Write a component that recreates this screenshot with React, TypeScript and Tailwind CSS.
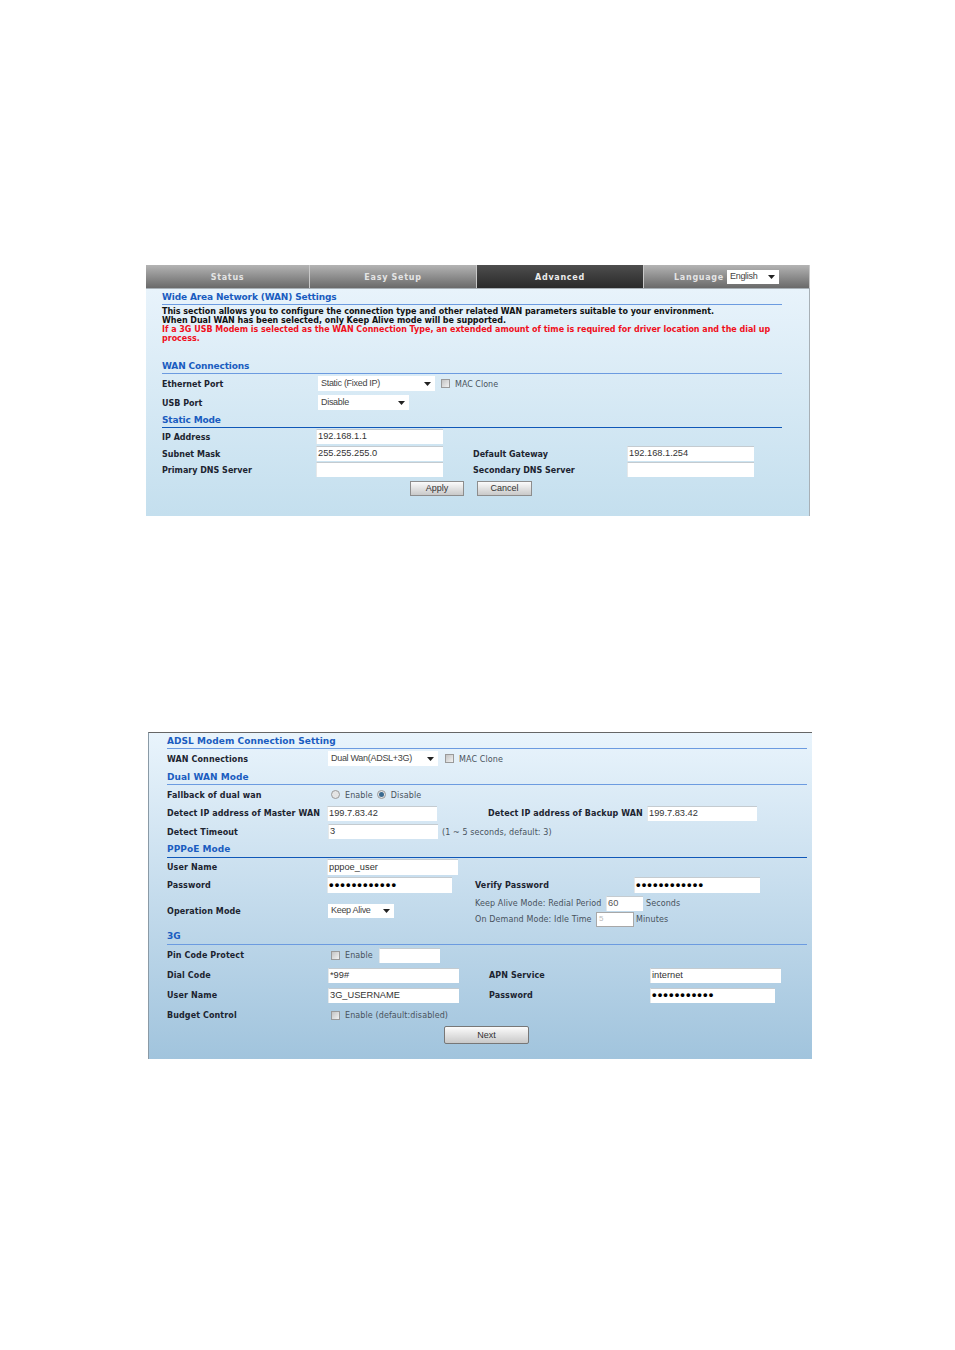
import type { ReactNode } from "react"

const labelFont = "font-['DejaVu_Sans',sans-serif]"
const inputFont = "font-['Liberation_Sans',Arial,sans-serif]"

function SectionHeading({ title, className, dark, wide }: { title: string; className: string; dark?: boolean; wide?: boolean }) {
  return (
    <div
      className={`flex items-center border-b text-[9px] font-bold leading-none text-[#1a5cc0] ${className} ${
        wide ? "tracking-[0.05px]" : "tracking-[-0.15px]"
      } ${dark ? "border-[#1058b8]" : "border-[#6c9be0]"}`}
    >
      {title}
    </div>
  )
}

function Label({ children, className = "" }: { children: ReactNode; className?: string }) {
  return (
    <span className={`shrink-0 whitespace-nowrap pt-[2px] text-[8px] font-bold leading-none text-[#1c2430] ${className}`}>
      {children}
    </span>
  )
}

function Note({ children, className = "" }: { children: ReactNode; className?: string }) {
  return (
    <span className={`shrink-0 whitespace-nowrap pt-[2px] text-[8px] leading-none text-[#48525c] ${className}`}>
      {children}
    </span>
  )
}

function TextBox({ value, className = "", dots }: { value?: string; className?: string; dots?: boolean }) {
  return (
    <span
      className={`flex shrink-0 items-center overflow-hidden whitespace-nowrap border-t border-l border-t-[#c4cbd0] border-l-[#e4e8ea] bg-white pl-[1px] leading-none text-[#333] ${inputFont} ${
        dots ? "pb-[2px] text-[13px] font-bold tracking-[1.12px] text-black" : "text-[9.25px] tracking-normal"
      } ${className}`}
    >
      {value}
    </span>
  )
}

function Select({ value, className = "" }: { value: string; className?: string }) {
  return (
    <span className={`flex shrink-0 items-center justify-between bg-white pl-[3px] pr-[3px] text-[9px] font-normal leading-none tracking-[-0.3px] text-[#444] ${inputFont} ${className}`}>
      {value}
      <svg width="7" height="4" viewBox="0 0 7 4" className="mr-[1px]">
        <path d="M0 0h7L3.5 4z" fill="#222" />
      </svg>
    </span>
  )
}

function Checkbox({ className = "" }: { className?: string }) {
  return <span className={`h-[9px] w-[9px] shrink-0 border border-[#9a9a9a] bg-gradient-to-br from-[#c4c4c4] to-[#f2f2f2] ${className}`} />
}

function Radio({ checked, className = "" }: { checked?: boolean; className?: string }) {
  return (
    <span className={`flex h-[9px] w-[9px] shrink-0 items-center justify-center rounded-full border border-[#9a9a9a] bg-[#e4e4e4] ${className}`}>
      {checked && <span className="h-[5px] w-[5px] rounded-full bg-[#3a6a90]" />}
    </span>
  )
}

function Button({ label, className = "" }: { label: string; className?: string }) {
  return (
    <span className={`flex shrink-0 items-center justify-center border border-[#8d8d8d] bg-gradient-to-b from-[#fbfbfb] to-[#c9c9c9] text-[9px] leading-none tracking-normal text-[#333] ${inputFont} ${className}`}>
      {label}
    </span>
  )
}

function Row({ children, height }: { children: ReactNode; height: string }) {
  return <div className={`flex items-center ${height}`}>{children}</div>
}

function Tab({ label, active, children, width }: { label: string; active?: boolean; children?: ReactNode; width: string }) {
  return (
    <div
      className={`flex h-full items-center justify-center gap-[3px] border-r border-[#c8c8c8] text-[8px] font-bold tracking-[0.09em] ${width} ${
        active
          ? "bg-gradient-to-b from-[#4e4e4e] to-[#2a2a2a] text-[#ececec]"
          : "bg-gradient-to-b from-[#b4b4b4] to-[#6a6a6a] text-[#e4e4e4]"
      }`}
    >
      <span className="pt-[2px] leading-none">{label}</span>
      {children}
    </div>
  )
}

function WanSettings() {
  return (
    <section className={`ml-[146px] w-[664px] tracking-[0px] ${labelFont}`}>
      <div className="flex h-[23px]">
        <Tab label="Status" width="w-[164px]" />
        <Tab label="Easy Setup" width="w-[167px]" />
        <Tab label="Advanced" width="w-[167px]" active />
        <Tab label="Language" width="w-[166px]">
          <Select value="English" className="h-[14px] w-[52px]" />
        </Tab>
      </div>
      <div className="border-t border-r border-[#a8b0b6] bg-gradient-to-b from-[#e8f3fb] to-[#c4dfee] pl-[16px] pb-[20px]">
        <div className="w-[620px]">
          <SectionHeading title="Wide Area Network (WAN) Settings" className="h-[16px] pt-[1px]" />
          <div className="mt-[2px] text-[8px] font-bold leading-[9px] tracking-[-0.02px] text-[#111]">
            <p>This section allows you to configure the connection type and other related WAN parameters suitable to your environment.</p>
            <p>When Dual WAN has been selected, only Keep Alive mode will be supported.</p>
            <p className="text-[#f0101c]">
              If a 3G USB Modem is selected as the WAN Connection Type, an extended amount of time is required for driver location and the dial up process.
            </p>
          </div>
          <div className="mt-[16px]">
            <SectionHeading title="WAN Connections" className="h-[15px] pt-[1px]" />
          </div>
          <Row height="h-[19px]">
            <Label className="w-[156px]">Ethernet Port</Label>
            <Select value="Static (Fixed IP)" className="h-[15px] w-[117px]" />
            <Checkbox className="ml-[6px]" />
            <Note className="ml-[5px]">MAC Clone</Note>
          </Row>
          <Row height="h-[19px]">
            <Label className="w-[156px]">USB Port</Label>
            <Select value="Disable" className="h-[15px] w-[91px]" />
          </Row>
          <SectionHeading title="Static Mode" className="h-[16px] pt-[2px]" dark />
          <Row height="h-[17px]">
            <Label className="w-[154px]">IP Address</Label>
            <TextBox value="192.168.1.1" className="h-[15px] w-[127px]" />
          </Row>
          <Row height="h-[17px]">
            <Label className="w-[154px]">Subnet Mask</Label>
            <TextBox value="255.255.255.0" className="h-[15px] w-[127px]" />
            <Label className="ml-[30px] w-[154px]">Default Gateway</Label>
            <TextBox value="192.168.1.254" className="h-[15px] w-[127px]" />
          </Row>
          <Row height="h-[15px]">
            <Label className="w-[154px]">Primary DNS Server</Label>
            <TextBox className="h-[15px] w-[127px]" />
            <Label className="ml-[30px] w-[154px]">Secondary DNS Server</Label>
            <TextBox className="h-[15px] w-[127px]" />
          </Row>
          <div className="mt-[4px] flex h-[15px] pl-[248px]">
            <Button label="Apply" className="w-[54px]" />
            <Button label="Cancel" className="ml-[13px] w-[55px]" />
          </div>
        </div>
      </div>
    </section>
  )
}

function ModemSettings() {
  return (
    <section className={`mt-[216px] ml-[148px] w-[664px] border-t border-l border-t-[#666] border-l-[#8a9aa6] bg-gradient-to-b from-[#e9f4fc] to-[#a1c4dd] pb-[15px] pl-[18px] tracking-[0.1px] ${labelFont}`}>
      <div className="w-[640px]">
        <SectionHeading title="ADSL Modem Connection Setting" className="h-[16px] pt-[2px]" wide />
        <Row height="h-[19px]">
          <Label className="w-[161px]">WAN Connections</Label>
          <Select value="Dual Wan(ADSL+3G)" className="h-[15px] w-[110px]" />
          <Checkbox className="ml-[7px]" />
          <Note className="ml-[5px]">MAC Clone</Note>
        </Row>
        <SectionHeading title="Dual WAN Mode" className="h-[17px] pt-[2px]" wide />
        <Row height="h-[19px]">
          <Label className="w-[164px]">Fallback of dual wan</Label>
          <Radio />
          <Note className="ml-[5px]">Enable</Note>
          <Radio checked className="ml-[4px]" />
          <Note className="ml-[5px]">Disable</Note>
        </Row>
        <Row height="h-[18px]">
          <Label className="w-[160px]">Detect IP address of Master WAN</Label>
          <TextBox value="199.7.83.42" className="h-[15px] w-[110px]" />
          <Label className="ml-[51px] w-[159px]">Detect IP address of Backup WAN</Label>
          <TextBox value="199.7.83.42" className="h-[15px] w-[110px]" />
        </Row>
        <Row height="h-[19px]">
          <Label className="w-[161px]">Detect Timeout</Label>
          <TextBox value="3" className="h-[15px] w-[110px]" />
          <Note className="ml-[4px]">(1 ~ 5 seconds, default: 3)</Note>
        </Row>
        <SectionHeading title="PPPoE Mode" className="h-[17px] pt-[1px]" dark wide />
        <Row height="h-[18px]">
          <Label className="w-[160px]">User Name</Label>
          <TextBox value="pppoe_user" className="h-[16px] w-[131px]" />
        </Row>
        <Row height="h-[17px]">
          <Label className="w-[160px]">Password</Label>
          <TextBox value="••••••••••••" dots className="h-[16px] w-[125px]" />
          <Label className="ml-[23px] w-[159px]">Verify Password</Label>
          <TextBox value="••••••••••••" dots className="h-[16px] w-[126px]" />
        </Row>
        <div className="flex h-[35px]">
          <div className="flex items-center">
            <Label className="w-[161px]">Operation Mode</Label>
            <Select value="Keep Alive" className="h-[14px] w-[66px]" />
          </div>
          <div className="ml-[81px] flex flex-col pt-[2px]">
            <div className="flex h-[16px] items-center">
              <Note className="w-[131px]">Keep Alive Mode: Redial Period</Note>
              <TextBox value="60" className="h-[15px] w-[37px] text-[#555]" />
              <Note className="ml-[3px]">Seconds</Note>
            </div>
            <div className="flex h-[16px] items-center">
              <Note className="w-[121px]">On Demand Mode: Idle Time</Note>
              <span className={`flex h-[15px] w-[38px] items-center border border-[#a8a8a8] bg-white pl-[2px] text-[8px] leading-none text-[#bbb] ${inputFont}`}>5</span>
              <Note className="ml-[2px]">Minutes</Note>
            </div>
          </div>
        </div>
        <SectionHeading title="3G" className="h-[17px] pt-[1px]" wide />
        <Row height="h-[20px]">
          <Label className="w-[164px]">Pin Code Protect</Label>
          <Checkbox />
          <Note className="ml-[5px]">Enable</Note>
          <TextBox className="ml-[6px] h-[15px] w-[61px]" />
        </Row>
        <Row height="h-[20px]">
          <Label className="w-[161px]">Dial Code</Label>
          <TextBox value="*99#" className="h-[15px] w-[131px]" />
          <Label className="ml-[30px] w-[161px]">APN Service</Label>
          <TextBox value="internet" className="h-[15px] w-[131px]" />
        </Row>
        <Row height="h-[20px]">
          <Label className="w-[161px]">User Name</Label>
          <TextBox value="3G_USERNAME" className="h-[15px] w-[131px]" />
          <Label className="ml-[30px] w-[161px]">Password</Label>
          <TextBox value="•••••••••••" dots className="h-[15px] w-[125px]" />
        </Row>
        <Row height="h-[20px]">
          <Label className="w-[164px]">Budget Control</Label>
          <Checkbox />
          <Note className="ml-[5px]">Enable (default:disabled)</Note>
        </Row>
        <div className="mt-[1px] flex h-[18px] pl-[277px]">
          <Button label="Next" className="w-[85px] rounded-[2px] border-[#777]" />
        </div>
      </div>
    </section>
  )
}

export default function App() {
  return (
    <div className="min-h-[1350px] w-[955px] bg-white pt-[265px]">
      <WanSettings />
      <ModemSettings />
    </div>
  )
}
